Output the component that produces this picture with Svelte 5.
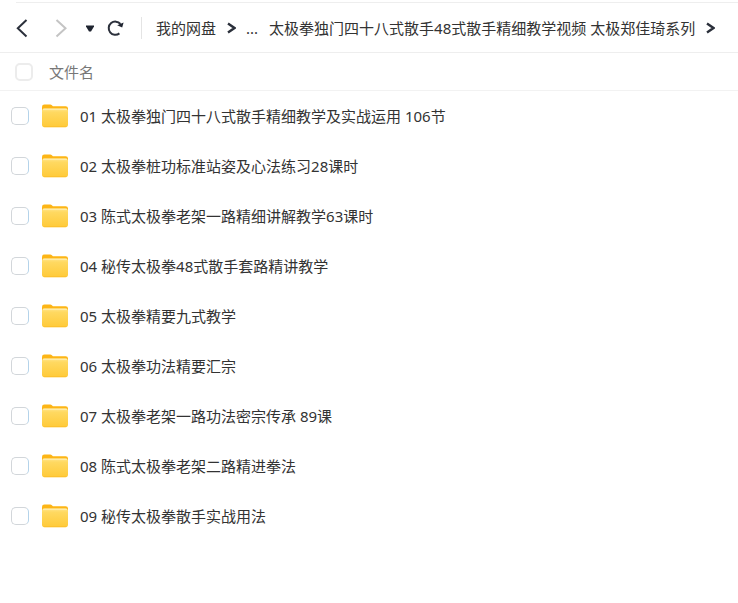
<script>
	const crumbs = ['我的网盘', '...', '太极拳独门四十八式散手48式散手精细教学视频 太极郑佳琦系列'];

	let folders = $state([
		{ name: '01 太极拳独门四十八式散手精细教学及实战运用 106节', checked: false },
		{ name: '02 太极拳桩功标准站姿及心法练习28课时', checked: false },
		{ name: '03 陈式太极拳老架一路精细讲解教学63课时', checked: false },
		{ name: '04 秘传太极拳48式散手套路精讲教学', checked: false },
		{ name: '05 太极拳精要九式教学', checked: false },
		{ name: '06 太极拳功法精要汇宗', checked: false },
		{ name: '07 太极拳老架一路功法密宗传承 89课', checked: false },
		{ name: '08 陈式太极拳老架二路精进拳法', checked: false },
		{ name: '09 秘传太极拳散手实战用法', checked: false }
	]);

	let allChecked = $derived(folders.every((f) => f.checked));

	function toggleAll(e) {
		const value = e.currentTarget.checked;
		folders.forEach((f) => (f.checked = value));
	}
</script>

{#snippet chevron()}
	<svg class="chevron" width="10" height="12" viewBox="0 0 10 12" aria-hidden="true">
		<path d="M2 1.500 8.500 6 2 10.500" />
	</svg>
{/snippet}

<div class="explorer">
	<header class="toolbar">
		<button class="back" aria-label="后退">
			<svg width="14" height="20" viewBox="0 0 14 20"><path d="M10.500 2 1.800 10.300l8.700 8.200" /></svg>
		</button>
		<button class="forward" aria-label="前进">
			<svg width="14" height="20" viewBox="0 0 14 20"><path d="m1.500 2 9 8.300-9 8.200" /></svg>
		</button>
		<button class="history" aria-label="历史记录">
			<svg width="8" height="8" viewBox="0 0 8 8"><path d="M0 1.500h8v1L5 7.500H3l-3-5z" /></svg>
		</button>
		<button class="refresh" aria-label="刷新">
			<svg width="18" height="18" viewBox="0 0 18 18">
				<path class="arc" d="M12.400 14.400A6.600 6.600 0 1 1 13.400 5" />
				<path class="tip" d="M16.600 3.600 15.200 8.400l-5-2.200z" />
			</svg>
		</button>
		<nav class="crumbs" aria-label="路径">
			<a href="#root">{crumbs[0]}</a>
			{@render chevron()}
			<a class="more" href="#more">{crumbs[1]}</a>
			<a class="current" href="#current">{crumbs[2]}</a>
			{@render chevron()}
		</nav>
	</header>

	<label class="head">
		<input type="checkbox" checked={allChecked} onchange={toggleAll} />
		<span>文件名</span>
	</label>

	<ul>
		{#each folders as folder (folder.name)}
			<li>
				<label>
					<input type="checkbox" bind:checked={folder.checked} />
					<svg class="folder" width="26" height="24" viewBox="0 0 26 24" aria-hidden="true">
						<defs>
							<linearGradient id="folder-front" x1="0" y1="0" x2="0" y2="1">
								<stop offset="0" stop-color="#ffe58e" />
								<stop offset="0.2" stop-color="#ffd961" />
								<stop offset="1" stop-color="#ffca38" />
							</linearGradient>
						</defs>
						<path d="M0 3Q0 .6 2.400.6h5.800q1 0 1.700.7l1 .9H23.600q2.400 0 2.400 2.400V12H0z" fill="#fdb515" />
						<path d="M0 7q0-2.600 2.600-2.600h20.800Q26 4.400 26 7v13.600q0 2.600-2.600 2.600H2.600Q0 23.200 0 20.600z" fill="url(#folder-front)" />
						<path d="M1.500 5.200h23" stroke="#fff0b8" stroke-linecap="round" />
						<path d="M2 22.600h22" stroke="#fdc02f" stroke-linecap="round" />
					</svg>
					<span>{folder.name}</span>
				</label>
			</li>
		{/each}
	</ul>
</div>

<style>
	:global(body) {
		background: #fff;
	}

	.explorer {
		padding-top: 2px;
		font-family: 'Noto Sans', 'Noto Sans CJK SC', sans-serif;
		font-size: 15px;
		line-height: 22px;
		color: #333;
	}

	.toolbar {
		display: flex;
		align-items: center;
		height: 49px;
		margin-left: 16px;
		border-top: 1px solid #eee;
	}

	button {
		display: flex;
		padding: 0;
		background: none;
		border: none;
		cursor: pointer;
	}

	button svg,
	.chevron {
		flex: none;
		fill: none;
		stroke: #2b303b;
		stroke-width: 2;
	}

	.forward {
		margin-left: 25px;
	}

	.forward svg {
		stroke: #c4c4c4;
	}

	.history {
		margin-left: 17px;
	}

	.history svg,
	.refresh .tip {
		fill: #1f2430;
		stroke: none;
	}

	.refresh {
		margin-left: 13px;
	}

	.crumbs {
		display: flex;
		align-items: center;
		flex: 1;
		min-width: 0;
		margin-left: 16px;
		padding-left: 14px;
		border-left: 1px solid #e4e4e4;
		white-space: nowrap;
	}

	a {
		color: inherit;
		text-decoration: none;
	}

	.crumbs .chevron {
		margin-left: 10px;
		stroke-width: 2.4;
	}

	.more {
		margin-left: 10px;
	}

	.current {
		margin-left: 11px;
		overflow: hidden;
	}

	.head {
		display: flex;
		align-items: center;
		gap: 16px;
		height: 37px;
		padding-left: 15px;
		border-top: 1px solid #eee;
		border-bottom: 1px solid #f2f2f2;
		color: #777;
	}

	input {
		appearance: none;
		flex: none;
		width: 18px;
		height: 18px;
		margin: 0;
		background: #fff;
		border: 1px solid #d2d6da;
		border-right-color: #b4d3ea;
		border-radius: 5px;
	}

	input:checked {
		background: #3b8cff;
		border-color: #3b8cff;
	}

	.head input {
		border: 2px solid #ececec;
	}

	ul {
		margin: 0;
		padding: 0;
		list-style: none;
	}

	li label {
		display: flex;
		align-items: center;
		height: 50px;
		padding-left: 11px;
	}

	.folder {
		flex: none;
		margin: 0 12px 0 13px;
	}
</style>
